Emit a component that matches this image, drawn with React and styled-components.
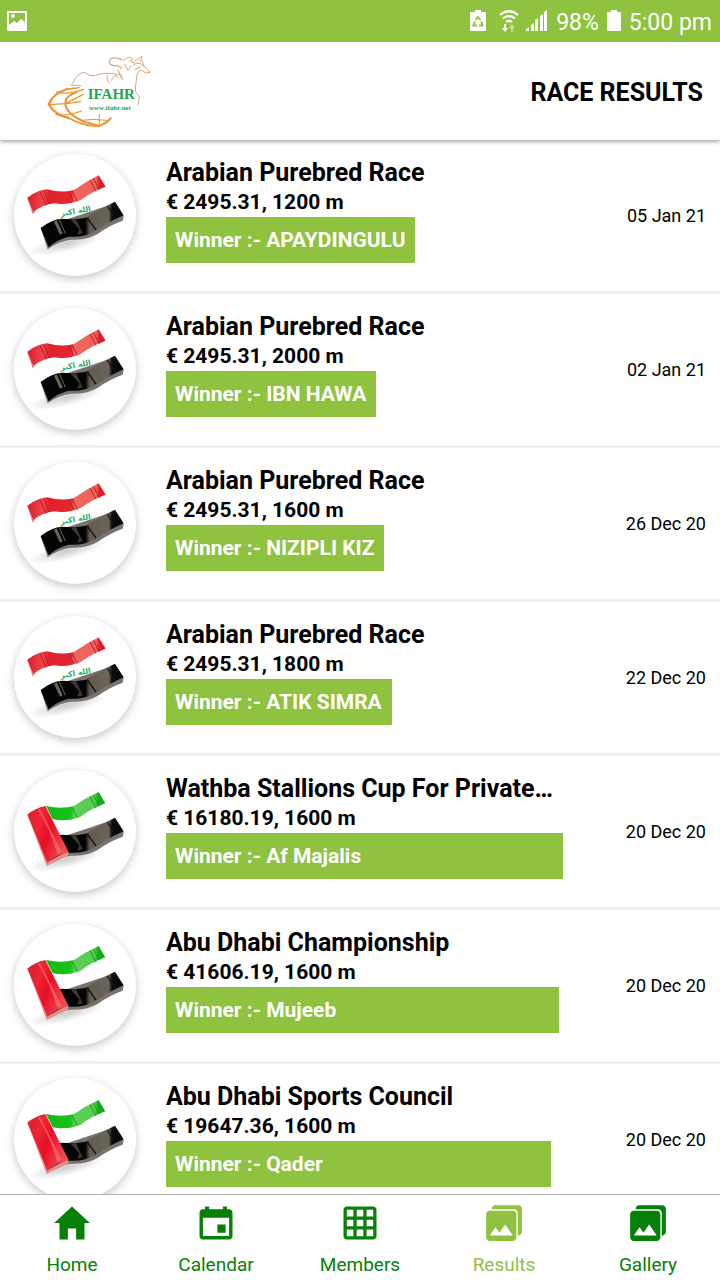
import React from "react";
import styled, { createGlobalStyle, css } from "styled-components";
import {
  IoMdHome,
  IoMdCalendar,
  IoMdGrid,
  IoMdPhotos,
} from "react-icons/io";

const GlobalStyle = createGlobalStyle`
  *, *::before, *::after { box-sizing: border-box; }
  body {
    margin: 0;
    background: #fff;
    color: #000;
    font-family: Roboto, "Liberation Sans", sans-serif;
  }
`;

const Screen = styled.div`
  display: flex;
  flex-direction: column;
  height: 100vh;
  overflow: hidden;
`;

const StatusBar = styled.div`
  position: relative;
  z-index: 2;
  display: flex;
  align-items: center;
  justify-content: space-between;
  flex: none;
  height: 42px;
  padding: 0 8px 0 6px;
  background: #8ec23f;
  color: #fff;
`;

const StatusGroup = styled.div`
  display: flex;
  align-items: center;
  gap: 8px;
`;

const StatusIcons = styled.div`
  display: flex;
  align-items: center;
  gap: 7px;

  svg:first-child {
    margin-right: 6px;
  }
`;

const StatusText = styled.span`
  font-size: 23px;
  line-height: 38px;
  padding-top: 4px;
`;

const Header = styled.header`
  position: relative;
  z-index: 1;
  display: flex;
  align-items: center;
  justify-content: space-between;
  flex: none;
  height: 98px;
  padding: 0 17px 0 40px;
  background: #fff;
  box-shadow: 0 1px 5px rgba(0, 0, 0, 0.45);
`;

const PageTitle = styled.h1`
  margin: 0;
  padding-top: 2px;
  font-size: 25px;
  line-height: 31px;
  font-weight: 700;
`;

const RaceList = styled.ul`
  flex: 1;
  min-height: 0;
  margin: 0;
  padding: 0;
  list-style: none;
  overflow-y: auto;
  scrollbar-width: none;
`;

const RaceRow = styled.li`
  display: flex;
  align-items: flex-start;
  padding: 14px 14px 15px;
  border-bottom: 3px solid #efefef;
`;

const FlagBadge = styled.div`
  flex: none;
  width: 122px;
  height: 122px;
  border-radius: 50%;
  background: #fff;
  box-shadow: 0 3px 10px rgba(0, 0, 0, 0.22);

  svg {
    display: block;
  }
`;

const RaceInfo = styled.div`
  flex: 1;
  min-width: 0;
  padding: 3px 16px 0 30px;
`;

const RaceTitle = styled.h2`
  margin: 0;
  font-size: 25px;
  line-height: 31px;
  font-weight: 700;
  white-space: nowrap;
  overflow: hidden;
  text-overflow: ellipsis;
`;

const RaceMeta = styled.p`
  margin: 0;
  font-size: 21px;
  line-height: 29px;
  font-weight: 700;
`;

const Winner = styled.p`
  width: fit-content;
  min-width: ${({ $minWidth }) => ($minWidth ? `${$minWidth}px` : "0")};
  max-width: 100%;
  margin: 0;
  padding: 1px 10px 0 9px;
  background: #8ec23f;
  color: #fff;
  font-size: 21px;
  line-height: 45px;
  font-weight: 700;
`;

const RaceDate = styled.time`
  flex: none;
  align-self: center;
  padding-top: 2px;
  font-size: 18px;
  line-height: 24px;
`;

const TabBar = styled.nav`
  display: flex;
  flex: none;
  height: 86px;
  border-top: 1px solid #b4b4b4;
  background: #fff;
`;

const Tab = styled.a`
  flex: 1;
  display: flex;
  flex-direction: column;
  align-items: center;
  gap: 8px;
  padding-top: 6px;
  color: #078007;
  font-size: 19px;
  line-height: 24px;
  text-decoration: none;

  ${({ $active }) =>
    $active &&
    css`
      color: #8ec23f;
    `}
`;

function PictureIcon() {
  return (
    <svg width="22" height="22" viewBox="0 0 22 22" aria-hidden="true">
      <path
        fill="#fff"
        fillRule="evenodd"
        d="M2 1h18q1 0 1 1v18q0 1-1 1H2q-1 0-1-1V2q0-1 1-1zM3 3v12l5-4 3 2 4-4 4 3V3z"
      />
      <circle cx="7" cy="6" r="2" fill="#fff" />
    </svg>
  );
}

function BatterySaverIcon() {
  return (
    <svg width="16" height="22" viewBox="0 0 16 22" aria-hidden="true">
      <path fill="#fff" d="M5 0h6v2h4q1 0 1 1v17q0 1-1 1H1q-1 0-1-1V3q0-1 1-1h4z" />
      <g fill="none" stroke="#8ec23f" strokeWidth="2">
        <path d="M5.600 10L8 7L10.400 10" />
        <path d="M11.200 11.500L12.500 15.500H9" />
        <path d="M7 15.500H3.500L4.800 11.500" />
      </g>
    </svg>
  );
}

function WifiIcon() {
  return (
    <svg width="20" height="24" viewBox="0 0 20 24" aria-hidden="true">
      <g fill="none" stroke="#fff" strokeWidth="2.200">
        <path d="M1 6Q10-1.500 19 6" />
        <path d="M4 9.500Q10 4.500 16 9.500" />
        <path d="M7 13Q10 10.500 13 13" />
      </g>
      <path fill="#fff" d="M5 15h2v4h2l-3 4-3-4h2z" />
      <path fill="#fff" opacity="0.5" d="M14 23h-2v-4h-2l3-4 3 4h-2z" />
    </svg>
  );
}

function SignalIcon() {
  return (
    <svg width="22" height="22" viewBox="0 0 22 22" fill="#fff" aria-hidden="true">
      <path d="M0 19l3-2v4H0zM5 15l3-2v8H5zM9 10l3-2v13H9zM14 6l3-2v17h-3zM18 2l3-2v21h-3z" />
    </svg>
  );
}

function BatteryIcon() {
  return (
    <svg width="14" height="22" viewBox="0 0 14 22" fill="#fff" aria-hidden="true">
      <path d="M4 0h6v2h3q1 0 1 1v17q0 1-1 1H1q-1 0-1-1V3q0-1 1-1h3z" />
    </svg>
  );
}

function Logo() {
  return (
    <svg width="120" height="84" viewBox="0 0 360 252" role="img" aria-label="IFAHR">
      <g fill="none" stroke="#f0922b" strokeLinecap="round">
        <path strokeWidth="7" d="M82 120Q38 134 26 166Q48 200 84 206" />
        <path strokeWidth="5" d="M84 206Q130 232 178 231Q204 222 212 208" />
        <path strokeWidth="6" d="M108 130Q74 142 76 164Q78 194 132 218L178 231" />
        <path strokeWidth="4" d="M26 166Q70 168 122 158M50 129Q82 138 130 122M48 197Q84 202 124 186M82 120L118 116M76 164L130 136" />
        <path strokeWidth="3" d="M178 231V196M124 214Q160 208 200 214M178 231L214 206" />
      </g>
      <g fill="none" stroke="#dca67c" strokeWidth="3" strokeLinecap="round">
        <path d="M98 102Q110 72 134 70Q150 84 166 80Q184 70 224 74L232 86" />
        <path d="M92 108L122 110" />
        <path strokeWidth="4" d="M246 32Q216 20 208 36Q206 50 226 50Q238 50 244 58" />
        <path d="M202 78Q198 94 208 102M214 94Q228 70 242 76L248 92M234 62L244 88" />
        <path d="M252 36Q262 18 278 28L270 36L284 42M254 46L264 64L274 50M286 36L306 22L302 36" />
        <path d="M280 48Q290 38 302 44L324 62L330 70L316 72Q302 60 296 66L288 86" />
        <path d="M284 62L302 54M306 34L312 52M290 88Q286 108 286 128L298 142L294 168" />
      </g>
      <g fill="#28a44b" fontFamily="'Liberation Serif', serif" fontWeight="700">
        <text x="143" y="151" fontSize="45">IFAHR</text>
        <text x="147" y="183" fontSize="21">www.ifahr.net</text>
      </g>
    </svg>
  );
}

function FlagDefs() {
  return (
    <svg width="0" height="0" style={{ display: "block" }} aria-hidden="true">
      <defs>
        <linearGradient id="redBand" x1="0" x2="1">
          <stop offset="0" stopColor="#d81f2a" />
          <stop offset="0.2" stopColor="#f2424a" />
          <stop offset="0.28" stopColor="#e3202c" />
          <stop offset="0.56" stopColor="#e3262f" />
          <stop offset="0.6" stopColor="#f0655f" />
          <stop offset="0.88" stopColor="#f0625d" />
          <stop offset="0.92" stopColor="#dc1f28" />
        </linearGradient>
        <linearGradient id="greenBand" x1="0" x2="1">
          <stop offset="0" stopColor="#16b716" />
          <stop offset="0.42" stopColor="#16c41a" />
          <stop offset="0.48" stopColor="#5bcf55" />
          <stop offset="0.82" stopColor="#58cb52" />
          <stop offset="0.88" stopColor="#12ac18" />
        </linearGradient>
        <linearGradient id="blackBand" x1="0" x2="1">
          <stop offset="0.54" stopColor="#050505" />
          <stop offset="0.59" stopColor="#625c51" />
          <stop offset="0.82" stopColor="#6a6459" />
          <stop offset="0.86" stopColor="#0a0a0a" />
        </linearGradient>
        <linearGradient id="hoist" x1="0" x2="1" y2="0.5">
          <stop offset="0" stopColor="#d6202e" />
          <stop offset="0.35" stopColor="#ee2434" />
          <stop offset="0.6" stopColor="#e80f25" />
          <stop offset="1" stopColor="#f04850" />
        </linearGradient>
        <radialGradient id="groundShade">
          <stop offset="0" stopColor="#000" stopOpacity="0.2" />
          <stop offset="1" stopColor="#000" stopOpacity="0" />
        </radialGradient>
      </defs>
    </svg>
  );
}

function BlackBand() {
  return (
    <>
      <path
        fill="#77736e"
        d="M122 246L143 310Q178 284 214 281Q262 284 296 262Q328 238 368 224L371 210L345 172Z"
      />
      <path
        fill="url(#blackBand)"
        d="M122 246Q154 220 186 218Q226 222 258 215Q292 192 345 167L371 208Q326 228 292 252Q254 276 206 272Q172 280 146 304Z"
      />
      <path stroke="#6a665c" strokeWidth="9" fill="none" d="M166 225L184 264" />
      <path stroke="#6a665c" strokeWidth="3" fill="none" d="M178 221L196 262" />
      <path fill="#3b3832" d="M212 221L228 219L248 262L232 266L238 250Z" />
      <path stroke="#18150f" strokeWidth="4" fill="none" d="M262 216L288 252M322 180L344 216" />
    </>
  );
}

function IraqFlag() {
  return (
    <svg width="122" height="122" viewBox="42 24 366 366" role="img" aria-label="Iraq">
      <ellipse cx="200" cy="292" rx="120" ry="26" fill="url(#groundShade)" transform="rotate(-14 200 292)" />
      <path fill="#fff" d="M98 198Q150 166 216 172L316 122L345 168L258 215L186 218L122 246Z" />
      <path fill="#f28b86" d="M82 156L98 206L106 194L92 152Z" />
      <path
        fill="url(#redBand)"
        d="M82 155Q112 132 142 130Q184 142 222 132Q256 108 296 88L317 122Q274 138 242 162Q204 178 164 172Q128 176 100 198Z"
      />
      <path stroke="#b3212b" strokeWidth="3" fill="none" d="M120 136L138 178M132 134L148 174M206 136L222 168M216 134L232 166M270 102L288 136M280 97L298 131" />
      <text
        x="228"
        y="203"
        fill="#28b060"
        fontFamily="'DejaVu Sans', sans-serif"
        fontSize="23"
        fontWeight="700"
        textAnchor="middle"
        transform="rotate(-10 228 203)"
      >
        الله اكبر
      </text>
      <BlackBand />
    </svg>
  );
}

function UaeFlag() {
  return (
    <svg width="122" height="122" viewBox="42 24 366 366" role="img" aria-label="United Arab Emirates">
      <ellipse cx="200" cy="292" rx="120" ry="26" fill="url(#groundShade)" transform="rotate(-14 200 292)" />
      <path fill="#fff" d="M150 172L316 124L345 168L258 215L190 218Z" />
      <path
        fill="url(#greenBand)"
        d="M138 132Q184 142 222 132Q256 108 296 90L316 124Q274 140 242 164Q204 180 158 172Z"
      />
      <path stroke="#189c1c" strokeWidth="3" fill="none" d="M216 136L232 166M270 104L288 138M280 99L298 133" />
      <BlackBand />
      <path fill="#e58d8b" d="M82 158L140 312L206 280L204 266L142 300Z" />
      <path fill="url(#hoist)" d="M82 158Q106 138 136 132L206 270Q170 278 142 302Z" />
      <path fill="#f4787a" opacity="0.6" d="M114 144L120 141L186 271L172 276Q150 200 114 144Z" />
    </svg>
  );
}

const flags = { iraq: IraqFlag, uae: UaeFlag };

const races = [
  { flag: "iraq", title: "Arabian Purebred Race", meta: "€ 2495.31, 1200 m", winner: "APAYDINGULU", date: "05 Jan 21" },
  { flag: "iraq", title: "Arabian Purebred Race", meta: "€ 2495.31, 2000 m", winner: "IBN HAWA", date: "02 Jan 21" },
  { flag: "iraq", title: "Arabian Purebred Race", meta: "€ 2495.31, 1600 m", winner: "NIZIPLI KIZ", date: "26 Dec 20" },
  { flag: "iraq", title: "Arabian Purebred Race", meta: "€ 2495.31, 1800 m", winner: "ATIK SIMRA", date: "22 Dec 20" },
  { flag: "uae", title: "Wathba Stallions Cup For Private…", meta: "€ 16180.19, 1600 m", winner: "Af Majalis", date: "20 Dec 20", width: 397 },
  { flag: "uae", title: "Abu Dhabi Championship", meta: "€ 41606.19, 1600 m", winner: "Mujeeb", date: "20 Dec 20", width: 393 },
  { flag: "uae", title: "Abu Dhabi Sports Council", meta: "€ 19647.36, 1600 m", winner: "Qader", date: "20 Dec 20", width: 385 },
];

const tabs = [
  { label: "Home", icon: IoMdHome },
  { label: "Calendar", icon: IoMdCalendar },
  { label: "Members", icon: IoMdGrid },
  { label: "Results", icon: IoMdPhotos, active: true },
  { label: "Gallery", icon: IoMdPhotos },
];

export default function App() {
  return (
    <Screen>
      <GlobalStyle />
      <FlagDefs />
      <StatusBar>
        <PictureIcon />
        <StatusGroup>
          <StatusIcons>
            <BatterySaverIcon />
            <WifiIcon />
            <SignalIcon />
          </StatusIcons>
          <StatusText>98%</StatusText>
          <BatteryIcon />
          <StatusText>5:00 pm</StatusText>
        </StatusGroup>
      </StatusBar>
      <Header>
        <Logo />
        <PageTitle>RACE RESULTS</PageTitle>
      </Header>
      <RaceList>
        {races.map((race, index) => {
          const Flag = flags[race.flag];
          return (
            <RaceRow key={index}>
              <FlagBadge>
                <Flag />
              </FlagBadge>
              <RaceInfo>
                <RaceTitle>{race.title}</RaceTitle>
                <RaceMeta>{race.meta}</RaceMeta>
                <Winner $minWidth={race.width}>Winner :- {race.winner}</Winner>
              </RaceInfo>
              <RaceDate>{race.date}</RaceDate>
            </RaceRow>
          );
        })}
      </RaceList>
      <TabBar>
        {tabs.map(({ label, icon: Icon, active }) => (
          <Tab key={label} href="#" $active={active} aria-current={active ? "page" : undefined}>
            <Icon size={44} aria-hidden="true" />
            {label}
          </Tab>
        ))}
      </TabBar>
    </Screen>
  );
}
